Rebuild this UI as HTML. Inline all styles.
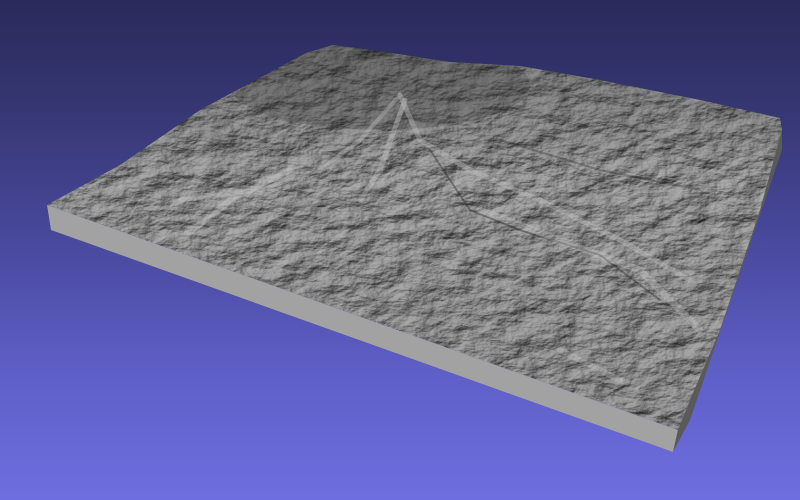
<!DOCTYPE html>
<html><head><meta charset="utf-8"><style>
html,body{margin:0;padding:0;width:800px;height:500px;overflow:hidden}
body{background:linear-gradient(180deg,#2a2a5c 0%,#353570 20%,#4a4aa0 50%,#5f5fc8 75%,#6e6ee0 100%)}
svg{position:absolute;left:0;top:0}
</style></head><body>
<svg width="800" height="500" viewBox="0 0 800 500">
<defs>
<filter id="t" x="0" y="0" width="100%" height="100%" color-interpolation-filters="sRGB">
<feTurbulence type="fractalNoise" baseFrequency="0.03 0.055" numOctaves="5" seed="7" result="n"/>
<feDiffuseLighting in="n" surfaceScale="5" lighting-color="#ffffff" diffuseConstant="1" result="l">
<feDistantLight azimuth="225" elevation="50"/>
</feDiffuseLighting>
<feColorMatrix type="matrix" values="0.6 0 0 0 0.08 0.6 0 0 0 0.08 0.6 0 0 0 0.08 0 0 0 0 1"/>
</filter>
<clipPath id="top"><path d="M47,205 L120,165 L200,110 L306,53 L333,45 L385,52 L450,62 L520,66 L600,80 L700,100 L780,118 L782,130 L760,210 L720,330 L690,400 L678,430 Z"/></clipPath>
<linearGradient id="shade" x1="0" y1="0" x2="0" y2="1">
<stop offset="0" stop-color="#202020" stop-opacity="0.35"/>
<stop offset="0.35" stop-color="#000" stop-opacity="0"/>
<stop offset="1" stop-color="#000" stop-opacity="0.05"/>
</linearGradient>
</defs>
<path d="M47,205 L678,430 L673,452 L51,230 Z" fill="#a2a2a2"/>
<path d="M678,430 L690,400 L782,130 L782,150 L690,420 L673,452 Z" fill="#5a5a5a"/>
<g clip-path="url(#top)">
<rect x="0" y="0" width="800" height="500" filter="url(#t)"/>
<rect x="0" y="0" width="800" height="500" fill="url(#shade)"/>
<ellipse cx="380" cy="85" rx="150" ry="45" fill="#333" opacity="0.25"/>
<g fill="none" stroke-linecap="round">
<path d="M400,95 L360,140 L320,170 L260,190 L180,200" stroke="#c8c8c8" stroke-width="4" opacity="0.35"/>
<path d="M400,95 L420,140 L470,170 L540,200 L620,240 L690,280" stroke="#c8c8c8" stroke-width="5" opacity="0.35"/>
<path d="M405,100 L380,170 L360,200" stroke="#d0d0d0" stroke-width="5" opacity="0.35"/>
<path d="M430,150 L470,210 L520,230 L600,255 L660,300" stroke="#333" stroke-width="2" opacity="0.45"/>
<path d="M480,210 L560,240 L640,270 L700,330" stroke="#d2d2d2" stroke-width="7" opacity="0.3"/>
<path d="M290,170 L230,200 L180,240" stroke="#d4d4d4" stroke-width="6" opacity="0.3"/>
<path d="M560,350 L620,380" stroke="#d0d0d0" stroke-width="6" opacity="0.3"/>
<path d="M500,140 L600,170 L700,190" stroke="#333" stroke-width="2" opacity="0.35"/>
</g>
</g>
</svg>
</body></html>
